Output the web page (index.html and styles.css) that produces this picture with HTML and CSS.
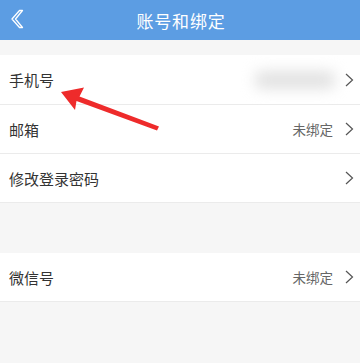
FILE: index.html
```html
<!DOCTYPE html>
<html lang="zh">
<head>
<meta charset="utf-8">
<link rel="stylesheet" href="styles.css">
</head>
<body>
<div class="page">
  <header class="topbar">
    <svg class="back" width="16" height="20" viewBox="0 0 16 20">
      <polygon points="9.5,1.5 2,10 9.5,18.5 12.5,18.5 5.5,10 12.5,1.5" fill="none" stroke="#ffffff" stroke-width="1.3" stroke-linejoin="round"/>
    </svg>
    <div class="title">账号和绑定</div>
  </header>
  <div class="gap-top"></div>
  <div class="group">
    <div class="row">
      <span class="label">手机号</span>
      <span class="right"><span class="blur"></span><svg class="chev" width="9" height="14" viewBox="0 0 9 14"><polyline points="1,1 7.5,7 1,13" fill="none" stroke="#555" stroke-width="1.2"/></svg></span>
    </div>
    <div class="row">
      <span class="label">邮箱</span>
      <span class="right"><span class="value">未绑定</span><svg class="chev" width="9" height="14" viewBox="0 0 9 14"><polyline points="1,1 7.5,7 1,13" fill="none" stroke="#555" stroke-width="1.2"/></svg></span>
    </div>
    <div class="row">
      <span class="label">修改登录密码</span>
      <span class="right"><svg class="chev" width="9" height="14" viewBox="0 0 9 14"><polyline points="1,1 7.5,7 1,13" fill="none" stroke="#555" stroke-width="1.2"/></svg></span>
    </div>
  </div>
  <div class="gap-mid"></div>
  <div class="group">
    <div class="row">
      <span class="label">微信号</span>
      <span class="right"><span class="value">未绑定</span><svg class="chev" width="9" height="14" viewBox="0 0 9 14"><polyline points="1,1 7.5,7 1,13" fill="none" stroke="#555" stroke-width="1.2"/></svg></span>
    </div>
  </div>
  <svg class="arrow" width="360" height="363" viewBox="0 0 360 363">
    <polygon points="61,92 84,87.5 79.5,96.5 159,126.5 157,130.5 76.5,101 75,110" fill="#ee2b2b"/>
  </svg>
</div>
</body>
</html>
```
FILE: styles.css
```css
* { box-sizing: border-box; margin: 0; padding: 0; }
html, body { width: 360px; height: 363px; overflow: hidden; }
body {
  background: #f6f6f6;
  font-family: "Noto Sans CJK SC", "Noto Sans", sans-serif;
  color: #333;
}
.page { position: relative; width: 360px; height: 363px; }
.topbar {
  height: 40px;
  background: #5c9de3;
  display: flex;
  align-items: center;
  justify-content: center;
  position: relative;
}
.back { position: absolute; left: 10px; top: 9px; }
.title { color: #fff; font-size: 17px; letter-spacing: 0.8px; margin-left: 2px; }
.gap-top { height: 15px; }
.gap-mid { height: 50px; }
.group { background: #fff; }
.row {
  height: 50px;
  display: flex;
  align-items: center;
  justify-content: space-between;
  padding: 0 6px 0 9px;
  border-bottom: 1px solid #ebebeb;
}
.group .row:nth-child(2) { height: 49px; }
.group .row:last-child { height: 49px; }
.label { font-size: 15px; color: #333; }
.right { display: flex; align-items: center; }
.value { font-size: 13.5px; color: #666; margin-right: 12px; }
.blur {
  width: 80px; height: 18px;
  background: #e2e2e2;
  filter: blur(7px);
  margin-right: 10px;
  border-radius: 6px;
}
.chev { display: block; }
.arrow { position: absolute; left: 0; top: 0; pointer-events: none; }
```
